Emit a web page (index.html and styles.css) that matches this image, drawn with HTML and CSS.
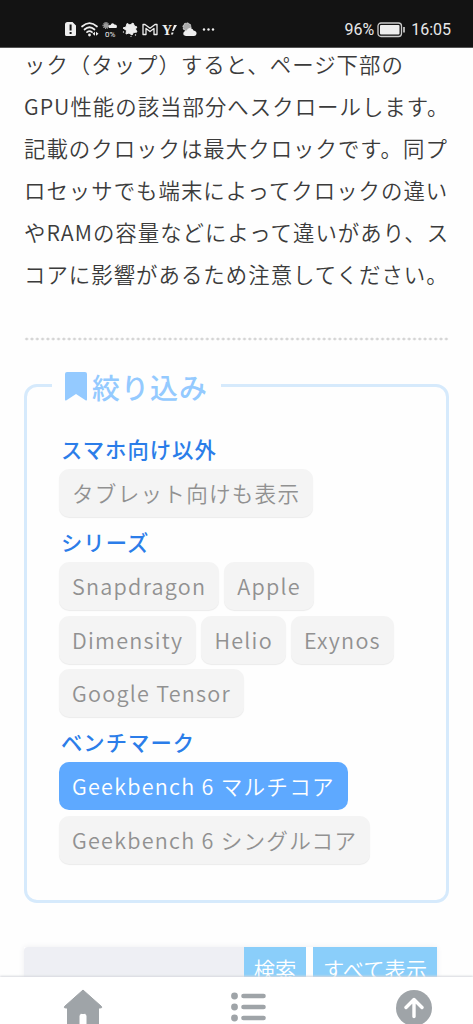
FILE: index.html
```html
<!DOCTYPE html>
<html lang="ja">
<head>
<meta charset="utf-8">
<title>絞り込み</title>
<link rel="stylesheet" href="styles.css">
</head>
<body>
<div class="screen">
  <header class="status">
    <svg class="status-icons" viewBox="0 0 155 18" width="155" height="18">
      <path fill="#eee" fill-rule="evenodd" d="M3.500 1H8.500L12 4.500V13.500Q12 15 10.500 15H2.500Q1 15 1 13.500V3.500Q1 1 3.500 1ZM5.600 3.500V9.500H7.600V3.500ZM5.600 11V13H7.600V11Z"/>
      <g fill="none" stroke="#eee" stroke-width="1.700" stroke-linecap="round">
        <path d="M18 5.500Q25.500-1.200 33 5.500M20.500 8.500Q25.500 4 30.500 8.500M23 11.200Q25.500 9 28 11.200"/>
      </g>
      <circle cx="25.500" cy="14" r="1.400" fill="#eee"/>
      <path d="M28.500 12.800L31 10.800V14.800ZM34.500 12.800L32 10.800V14.800Z" fill="#eee"/>
      <circle cx="42" cy="4.500" r="2.500" fill="#999"/><circle cx="42" cy="4.500" r="3" fill="none" stroke="#ddd" stroke-width="1" stroke-dasharray="1.200 1"/>
      <path d="M45 7Q43.500 4 46.500 4Q48 1 50.500 3.500Q54 3.500 52.500 7Z" fill="#eee"/>
      <text class="rain" x="41" y="15.500">0%</text>
      <path d="M59 7L62 6L63 2.500L66 4L69 2L70.500 5L73 6L71.500 8L73 11L69.500 11.500L68 14L65 12L62 13L62.500 9.500Z" fill="#eee" stroke="#eee" stroke-width="1" stroke-linejoin="round"/>
      <circle cx="59.500" cy="11" r=".7" fill="#eee"/><circle cx="71.500" cy="14" r=".7" fill="#eee"/><circle cx="67" cy="15.500" r=".6" fill="#eee"/>
      <path d="M79 13.500V3.500H81L86 7.300L91 3.500H93V13.500H90V7.500L86 10.500L82 7.500V13.500Z" fill="none" stroke="#eee" stroke-width="1.300" stroke-linejoin="round"/>
      <text class="yahoo" x="98" y="13.500">Y</text>
      <path d="M110 4H113L109.500 10H108ZM107.500 11.500H109.500L109 13.500H107Z" fill="#eee"/>
      <circle cx="123" cy="6" r="4" fill="#aaa" stroke="#ddd" stroke-width="1" stroke-dasharray="2 1"/>
      <path d="M122 15Q118.500 14.500 119.500 11.500Q120.500 9.500 122.500 9.800Q124 6 127.500 7.500Q129 8 129.500 9.500Q133 10 132.500 13Q132 15 130 15Z" fill="#eee"/>
      <circle cx="140" cy="8.500" r="1.200" fill="#eee"/><circle cx="144.500" cy="8.500" r="1.200" fill="#eee"/><circle cx="149" cy="8.500" r="1.200" fill="#eee"/>
    </svg>
    <div class="status-right">
      <span class="percent">96%</span>
      <svg viewBox="0 0 29 16" width="29" height="16">
        <rect x="1" y="1" width="23.500" height="13.500" rx="3" fill="none" stroke="#ccc" stroke-width="1.300"/>
        <rect x="3" y="3" width="19.500" height="9.500" rx="1" fill="#eee"/>
        <path d="M27 5V10.500" stroke="#ccc" stroke-width="1.700"/>
      </svg>
      <span class="time">16:05</span>
    </div>
  </header>

  <main class="content">
    <p class="intro">ック（タップ）すると、ページ下部の<br>GPU性能の該当部分へスクロールします。<br>記載のクロックは最大クロックです。同プ<br>ロセッサでも端末によってクロックの違い<br>やRAMの容量などによって違いがあり、ス<br>コアに影響があるため注意してください。</p>
    <div class="divider"></div>

    <section class="filter">
      <h2 class="filter-title">
        <svg viewBox="0 0 22 29" width="22" height="29"><path d="M2 0H20Q22 0 22 2V27.500Q22 29 20.500 28.200L11 22L1.500 28.200Q0 29 0 27.500V2Q0 0 2 0Z" fill="#94caff"/></svg>
        <span>絞り込み</span>
      </h2>
      <h3 class="group-title">スマホ向け以外</h3>
      <div class="chips"><span class="chip">タブレット向けも表示</span></div>
      <h3 class="group-title">シリーズ</h3>
      <div class="chips">
        <span class="chip">Snapdragon</span><span class="chip">Apple</span>
        <span class="chip">Dimensity</span><span class="chip">Helio</span><span class="chip">Exynos</span>
        <span class="chip">Google Tensor</span>
      </div>
      <h3 class="group-title">ベンチマーク</h3>
      <div class="chips">
        <span class="chip chip-active">Geekbench 6 マルチコア</span>
        <span class="chip">Geekbench 6 シングルコア</span>
      </div>
    </section>

    <div class="search">
      <div class="search-input"></div>
      <div class="search-button">検索</div>
      <div class="search-button search-all">すべて表示</div>
    </div>
  </main>

  <nav class="bottom-nav">
    <svg class="nav-home" viewBox="0 0 40 36" width="40" height="36"><path d="M20 1L38.500 17.500Q39.500 19 37 19H35.500V36H24V27Q24 24.500 21.500 24.500H18.500Q16 24.500 16 27V36H4.500V19H3Q.5 19 1.500 17.500Z" fill="#9fa4a8" stroke="#9fa4a8" stroke-linejoin="round"/></svg>
    <svg class="nav-list" viewBox="0 0 36 30" width="36" height="30">
      <g fill="#9fa4a8"><circle cx="3.500" cy="4" r="3.400"/><circle cx="3.500" cy="15" r="3.400"/><circle cx="3.500" cy="26" r="3.400"/></g>
      <path d="M12.500 4H32.500M12.500 15H32.500M12.500 26H32.500" stroke="#9fa4a8" stroke-width="4.600" stroke-linecap="round"/>
    </svg>
    <svg class="nav-top" viewBox="0 0 36 36" width="36" height="36"><circle cx="18" cy="18" r="18" fill="#9fa4a8"/><path d="M18 26.500V9.500M10 17.500L18 9.500L26 17.500" fill="none" stroke="#fff" stroke-width="3.400" stroke-linecap="round" stroke-linejoin="round"/></svg>
  </nav>
</div>
</body>
</html>
```
FILE: styles.css
```css
* { box-sizing: border-box; }
body {
  margin: 0;
  background: #fefefe;
  color: #3b3b3b;
  font-family: "Noto Sans CJK JP", sans-serif;
  font-weight: 350;
}
.screen {
  position: relative;
  height: 1024px;
  overflow: hidden;
}
.status {
  position: relative;
  z-index: 1;
  display: flex;
  justify-content: space-between;
  align-items: center;
  height: 48px;
  padding: 12px 22px 0 64px;
  background: #131313;
  border-bottom: 1px solid #555;
  color: #e8e8e8;
}
.status-icons { overflow: visible; }
.rain { font: 8px Roboto, sans-serif; fill: #eee; }
.yahoo { font: bold 14px "Liberation Serif", serif; fill: #eee; }
.status-right {
  display: flex;
  align-items: center;
  font: 16px/20px Roboto, sans-serif;
}
.percent { margin-right: 3px; }
.time { margin-left: 5px; }
.content { padding: 0 24px; }
.intro {
  margin: -5px 0 0;
  font-size: 21.400px;
  letter-spacing: 1.030px;
  line-height: 41.900px;
  white-space: nowrap;
}
.divider {
  height: 4px;
  margin-top: 43px;
  background: radial-gradient(circle at center, #d4d4d4 1.200px, transparent 1.700px) 0 0 / 5.320px 4px repeat-x;
}
.filter {
  height: 519px;
  margin-top: 43px;
  padding: 0 24px 0 32px;
  border: 3px solid #d6eafc;
  border-radius: 13px;
}
.filter-title {
  display: flex;
  align-items: center;
  gap: 6px;
  width: 169px;
  height: 40px;
  margin: -20px 0 17px -7px;
  padding-left: 13px;
  background: #fefefe;
  color: #94caff;
  font-size: 28px;
  font-weight: 500;
  letter-spacing: 1px;
  line-height: 40px;
}
.filter-title svg { position: relative; top: -1px; }
.filter-title span { margin-left: -1px; }
.group-title {
  height: 45px;
  margin: 0;
  padding: 4px 0 0 2px;
  color: #2b7de9;
  font-size: 21.300px;
  font-weight: 500;
  letter-spacing: 1.050px;
  line-height: 42px;
}
.chips {
  display: flex;
  flex-wrap: wrap;
  gap: 5.500px 5px;
}
.chip {
  height: 48px;
  padding: 0 13px;
  border-radius: 10px;
  background: #f4f4f4;
  box-shadow: 0 1px 1px #ebebeb;
  color: #919191;
  font-size: 21.580px;
  letter-spacing: 1.250px;
  line-height: 47px;
  white-space: nowrap;
}
.chip-active {
  background: #5ea9ff;
  box-shadow: none;
  color: #fff;
}
.search {
  display: flex;
  width: 413px;
  margin-top: 44px;
  height: 50px;
  box-shadow: 0 0 6px #efeff1;
}
.search-input {
  flex: 1;
  border-radius: 4px 0 0 0;
  background: #eeeff4;
}
.search-button {
  width: 62px;
  background: #8acefa;
  color: #fff;
  font-size: 21.300px;
  line-height: 43px;
  text-align: center;
}
.search-all {
  width: 131px;
  border-left: 7px solid #fefefe;
}
.bottom-nav {
  position: absolute;
  inset: auto 0 0;
  z-index: 2;
  display: grid;
  grid-template-columns: repeat(3, 1fr);
  justify-items: center;
  height: 47px;
  background: #fff;
  box-shadow: 0 -1px 2px #d6d8dd;
}
.nav-home { margin: 12px 0 0 8px; }
.nav-list { margin: 15px 0 0 26px; }
.nav-top { margin: 13px 0 0 40px; }
```
